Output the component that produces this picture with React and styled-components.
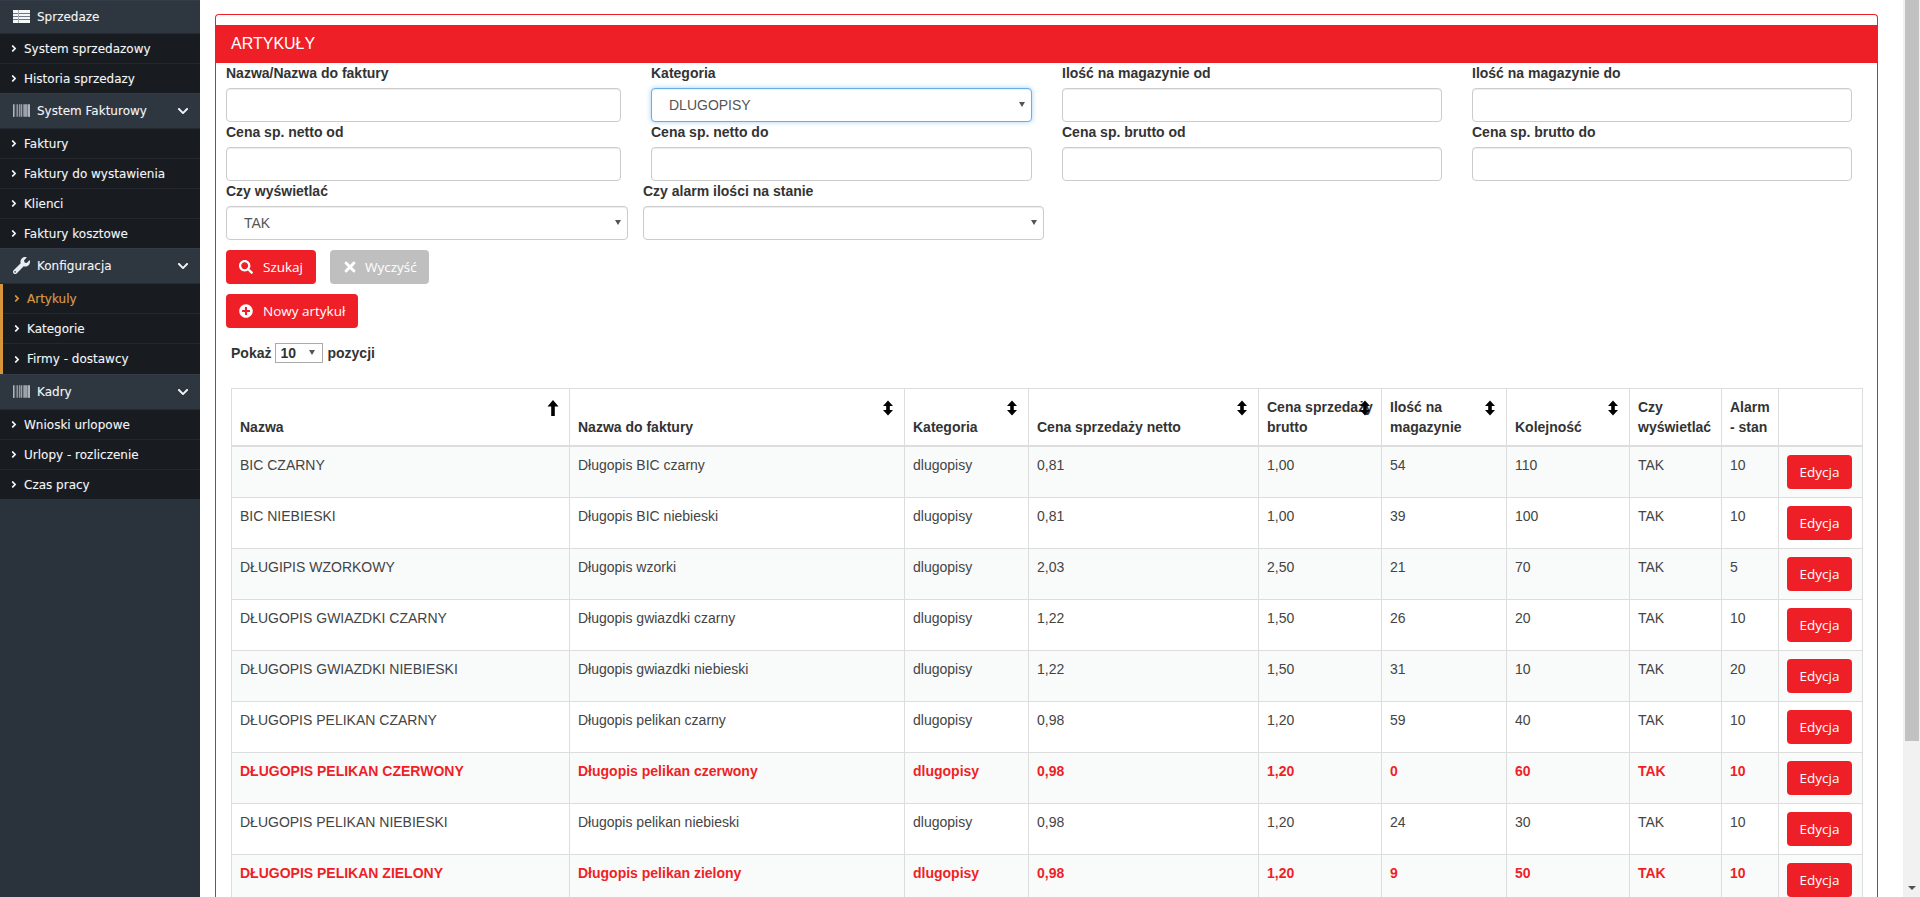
import React from "react";
import styled, { createGlobalStyle } from "styled-components";
import { FaBarcode, FaWrench, FaChevronDown, FaAngleRight, FaSearch, FaTimes, FaPlusCircle } from "react-icons/fa";

const RED = "#ef1f28";

const Global = createGlobalStyle`
  html, body { margin: 0; padding: 0; height: 100%; overflow: hidden; }
  body { font-family: "Liberation Sans", Arial, sans-serif; font-size: 14px; color: #333; background: #fff; }
  * { box-sizing: border-box; }
`;

const Page = styled.div`
  display: flex;
  height: 100vh;
  overflow: hidden;
`;

const Sidebar = styled.nav`
  flex: 0 0 200px;
  background: #2a323b;
  font-family: "DejaVu Sans", Verdana, sans-serif;
  font-size: 12px;
  color: #f2f5f7;
  text-shadow: 0 0 1px rgba(255, 255, 255, 0.25);
`;

const GroupHeader = styled.div`
  display: flex;
  align-items: center;
  height: ${p => (p.$first ? "34px" : "36px")};
  padding: 0 10px 0 13px;
  background: #2e3640;
  border-bottom: 1px solid #242a31;
  box-shadow: inset 0 1px 0 #343c47;
`;

const GroupIcon = styled.span`
  flex: 0 0 24px;
  display: flex;
  align-items: center;
  font-size: 17px;
  color: #e9edf1;
  svg { display: block; }
`;

const GroupTitle = styled.span`
  flex: 1;
`;

const Caret = styled(FaChevronDown)`
  font-size: 12px;
  margin-right: 1px;
`;

const SubList = styled.ul`
  list-style: none;
  margin: 0;
  padding: 0;
  background: #181c21;
  border-left: ${p => (p.$active ? "3px solid #d8963a" : "0")};
`;

const SubItem = styled.li`
  display: flex;
  align-items: center;
  height: 30px;
  padding-left: 8px;
  border-bottom: 1px solid #24282e;
  color: ${p => (p.$current ? "#d8963a" : "#f2f5f7")};
  &:last-child { border-bottom: 0; height: ${p => (p.$keep ? "30px" : "29px")}; }
`;

const SubArrow = styled(FaAngleRight)`
  flex: 0 0 12px;
  font-size: 11px;
  margin-right: 4px;
`;

const Main = styled.main`
  flex: 1;
  min-width: 0;
  padding: 14px 25px 0 15px;
  overflow: hidden;
`;

const Panel = styled.section`
  border: 1px solid ${RED};
  border-bottom: 0;
  border-radius: 4px 4px 0 0;
  padding-top: 10px;
`;

const PanelHeader = styled.h1`
  margin: 0;
  height: 38px;
  padding: 0 15px;
  background: ${RED};
  color: #fff;
  font-size: 16px;
  font-weight: 400;
  line-height: 37px;
`;

const PanelBody = styled.div`
  padding: 0 10px;
`;

const FormRow = styled.div`
  display: grid;
  grid-template-columns: ${p => p.$columns};
  column-gap: ${p => p.$gap}px;
`;

const Label = styled.label`
  display: block;
  height: 25px;
  font-weight: 700;
  line-height: 20px;
`;

const Input = styled.input`
  display: block;
  width: 100%;
  height: 34px;
  border: 1px solid #ccc;
  border-radius: 4px;
  background: #fff;
  box-shadow: inset 0 1px 1px rgba(0, 0, 0, 0.075);
`;

const SelectWrap = styled.div`
  position: relative;
  &::after {
    content: "";
    position: absolute;
    right: ${p => (p.$small ? "8px" : "7px")};
    top: ${p => (p.$small ? "7px" : "14px")};
    border-left: 3.5px solid transparent;
    border-right: 3.5px solid transparent;
    border-top: 5px solid #555;
    pointer-events: none;
  }
`;

const Select = styled.select`
  display: block;
  width: 100%;
  height: 34px;
  padding: 0 12px 0 17px;
  appearance: none;
  border: 1px solid ${p => (p.$focused ? "#66afe9" : "#ccc")};
  border-radius: 4px;
  background: #fff;
  color: #555;
  font: 14px "Liberation Sans", Arial, sans-serif;
  box-shadow: ${p => (p.$focused ? "inset 0 1px 1px rgba(0,0,0,.075), 0 0 5px rgba(102,175,233,.6)" : "inset 0 1px 1px rgba(0,0,0,.075)")};
`;

const ButtonRow = styled.div`
  display: flex;
  gap: 14px;
  margin-top: 10px;
`;

const Button = styled.button`
  display: flex;
  align-items: center;
  gap: ${p => (p.$muted ? "7px" : "10px")};
  height: 34px;
  padding: 0 ${p => (p.$muted ? "12px" : "13px")};
  border: 0;
  border-radius: 4px;
  background: ${p => (p.$muted ? "#bfbfbf" : RED)};
  color: #fff;
  font: 13.5px "Open Sans", sans-serif;
  svg { font-size: ${p => (p.$muted ? "16px" : "14px")}; display: block; }
`;

const PageSize = styled.div`
  display: flex;
  align-items: center;
  gap: 4px;
  height: 20px;
  margin: 15px 0 25px 5px;
  font-weight: 700;
`;

const SmallSelectWrap = styled(SelectWrap)`
  width: 48px;
`;

const SmallSelect = styled.select`
  display: block;
  width: 100%;
  height: 20px;
  padding: 0 0 0 4px;
  appearance: none;
  border: 1px solid #aaa;
  border-radius: 0;
  background: #fff;
  color: #333;
  font: 700 14px "Liberation Sans", Arial, sans-serif;
`;

const TableWrap = styled.div`
  margin-left: 5px;
`;

const Table = styled.table`
  table-layout: fixed;
  width: 1631px;
  border-collapse: collapse;
  font-size: 14px;
  line-height: 20px;
`;

const Th = styled.th`
  position: relative;
  padding: 8px;
  border: 1px solid #ddd;
  border-bottom-width: 2px;
  text-align: left;
  vertical-align: bottom;
  font-weight: 700;
`;

const SortIcon = styled.svg`
  position: absolute;
  top: 9px;
  right: 9px;
  width: 14px;
  height: 20px;
`;

const Tr = styled.tr`
  background: ${p => (p.$odd ? "#f9fbfa" : "#fff")};
  color: ${p => (p.$alert ? RED : "#444")};
  font-weight: ${p => (p.$alert ? 700 : 400)};
`;

const Td = styled.td`
  padding: 8px;
  border: 1px solid #ddd;
  vertical-align: top;
`;

const EditButton = styled.button`
  display: block;
  width: 65px;
  height: 34px;
  padding: 0;
  border: 0;
  border-radius: 4px;
  background: ${RED};
  color: #fff;
  font: 400 13.5px "Open Sans", sans-serif;
`;

const ScrollTrack = styled.div`
  flex: 0 0 17px;
  display: flex;
  flex-direction: column;
  justify-content: space-between;
  align-items: center;
  background: #f1f1f1;
`;

const ScrollThumb = styled.div`
  width: 14px;
  height: 741px;
  margin-left: 1px;
  background: #c1c1c1;
`;

const ScrollDown = styled.div`
  margin-bottom: 7px;
  margin-left: 1px;
  border-left: 4px solid transparent;
  border-right: 4px solid transparent;
  border-top: 4px solid #505050;
`;

function SortGlyph({ both }) {
  return (
    <SortIcon viewBox="0 0 14 20" aria-hidden="true">
      <path
        d={both
          ? "M7 2.500 12 8H8.800V12H12L7 17.500 2 12H5.200V8H2Z"
          : "M7 2 12.500 8.500H8.800V18H5.200V8.500H1.500Z"}
        fill="#000"
      />
    </SortIcon>
  );
}

const RowsIcon = () => (
  <svg width="17" height="13" viewBox="0 0 17 13" aria-hidden="true">
    <rect width="17" height="13" fill="#f4f6f8" />
    <path d="M0 3.500H17M0 6.500H17M0 9.500H17" stroke="#6f7780" strokeWidth="1" />
    <path d="M5.500 0V13" stroke="#aab1b8" strokeWidth="1" />
  </svg>
);

const menu = [
  { title: "Sprzedaze", icon: <RowsIcon />, first: true, items: ["System sprzedazowy", "Historia sprzedazy"] },
  { title: "System Fakturowy", icon: <FaBarcode />, caret: true, items: ["Faktury", "Faktury do wystawienia", "Klienci", "Faktury kosztowe"] },
  { title: "Konfiguracja", icon: <FaWrench />, caret: true, active: true, items: ["Artykuly", "Kategorie", "Firmy - dostawcy"] },
  { title: "Kadry", icon: <FaBarcode />, caret: true, items: ["Wnioski urlopowe", "Urlopy - rozliczenie", "Czas pracy"] },
];

const columns = [
  { w: 338, label: "Nazwa", sort: "up" },
  { w: 335, label: "Nazwa do faktury", sort: "both" },
  { w: 124, label: "Kategoria", sort: "both" },
  { w: 230, label: "Cena sprzedaży netto", sort: "both" },
  { w: 123, label: "Cena sprzedaży brutto", sort: "both" },
  { w: 125, label: "Ilość na magazynie", sort: "both" },
  { w: 123, label: "Kolejność", sort: "both" },
  { w: 92, label: "Czy wyświetlać" },
  { w: 57, label: "Alarm - stan" },
  { w: 84, label: "" },
];

const rows = [
  ["BIC CZARNY", "Długopis BIC czarny", "0,81", "1,00", "54", "110", "10"],
  ["BIC NIEBIESKI", "Długopis BIC niebieski", "0,81", "1,00", "39", "100", "10"],
  ["DŁUGIPIS WZORKOWY", "Długopis wzorki", "2,03", "2,50", "21", "70", "5"],
  ["DŁUGOPIS GWIAZDKI CZARNY", "Długopis gwiazdki czarny", "1,22", "1,50", "26", "20", "10"],
  ["DŁUGOPIS GWIAZDKI NIEBIESKI", "Długopis gwiazdki niebieski", "1,22", "1,50", "31", "10", "20"],
  ["DŁUGOPIS PELIKAN CZARNY", "Długopis pelikan czarny", "0,98", "1,20", "59", "40", "10"],
  ["DŁUGOPIS PELIKAN CZERWONY", "Długopis pelikan czerwony", "0,98", "1,20", "0", "60", "10", true],
  ["DŁUGOPIS PELIKAN NIEBIESKI", "Długopis pelikan niebieski", "0,98", "1,20", "24", "30", "10"],
  ["DŁUGOPIS PELIKAN ZIELONY", "Długopis pelikan zielony", "0,98", "1,20", "9", "50", "10", true],
];

const Field = ({ label, children }) => (
  <div>
    <Label>{label}</Label>
    {children}
  </div>
);

const DropDown = ({ value, focused }) => (
  <SelectWrap>
    <Select $focused={focused} defaultValue={value}>
      <option value={value}>{value}</option>
    </Select>
  </SelectWrap>
);

export default function App() {
  return (
    <Page>
      <Global />
      <Sidebar>
        {menu.map(group => (
          <div key={group.title}>
            <GroupHeader $first={group.first}>
              <GroupIcon>{group.icon}</GroupIcon>
              <GroupTitle>{group.title}</GroupTitle>
              {group.caret && <Caret />}
            </GroupHeader>
            <SubList $active={group.active}>
              {group.items.map(item => (
                <SubItem key={item} $current={item === "Artykuly"} $keep={group.active}>
                  <SubArrow />
                  {item}
                </SubItem>
              ))}
            </SubList>
          </div>
        ))}
      </Sidebar>
      <Main>
        <Panel>
          <PanelHeader>ARTYKUŁY</PanelHeader>
          <PanelBody>
            <FormRow $columns="395px 381px 380px 380px" $gap={30}>
              <Field label="Nazwa/Nazwa do faktury"><Input /></Field>
              <Field label="Kategoria"><DropDown value="DLUGOPISY" focused /></Field>
              <Field label="Ilość na magazynie od"><Input /></Field>
              <Field label="Ilość na magazynie do"><Input /></Field>
              <Field label="Cena sp. netto od"><Input /></Field>
              <Field label="Cena sp. netto do"><Input /></Field>
              <Field label="Cena sp. brutto od"><Input /></Field>
              <Field label="Cena sp. brutto do"><Input /></Field>
            </FormRow>
            <FormRow $columns="402px 401px" $gap={15}>
              <Field label="Czy wyświetlać"><DropDown value="TAK" /></Field>
              <Field label="Czy alarm ilości na stanie"><DropDown value="" /></Field>
            </FormRow>
            <ButtonRow>
              <Button><FaSearch />Szukaj</Button>
              <Button $muted><FaTimes />Wyczyść</Button>
            </ButtonRow>
            <ButtonRow>
              <Button><FaPlusCircle />Nowy artykuł</Button>
            </ButtonRow>
            <PageSize>
              Pokaż
              <SmallSelectWrap $small>
                <SmallSelect defaultValue="10"><option>10</option></SmallSelect>
              </SmallSelectWrap>
              pozycji
            </PageSize>
            <TableWrap>
              <Table>
                <colgroup>
                  {columns.map((c, i) => <col key={i} style={{ width: c.w }} />)}
                </colgroup>
                <thead>
                  <tr>
                    {columns.map((c, i) => (
                      <Th key={i}>
                        {c.sort && <SortGlyph both={c.sort === "both"} />}
                        {c.label}
                      </Th>
                    ))}
                  </tr>
                </thead>
                <tbody>
                  {rows.map(([name, invoice, net, gross, qty, order, alarmValue, alert], i) => (
                    <Tr key={name} $odd={i % 2 === 0} $alert={alert}>
                      <Td>{name}</Td>
                      <Td>{invoice}</Td>
                      <Td>dlugopisy</Td>
                      <Td>{net}</Td>
                      <Td>{gross}</Td>
                      <Td>{qty}</Td>
                      <Td>{order}</Td>
                      <Td>TAK</Td>
                      <Td>{alarmValue}</Td>
                      <Td><EditButton>Edycja</EditButton></Td>
                    </Tr>
                  ))}
                </tbody>
              </Table>
            </TableWrap>
          </PanelBody>
        </Panel>
      </Main>
      <ScrollTrack>
        <ScrollThumb />
        <ScrollDown />
      </ScrollTrack>
    </Page>
  );
}
